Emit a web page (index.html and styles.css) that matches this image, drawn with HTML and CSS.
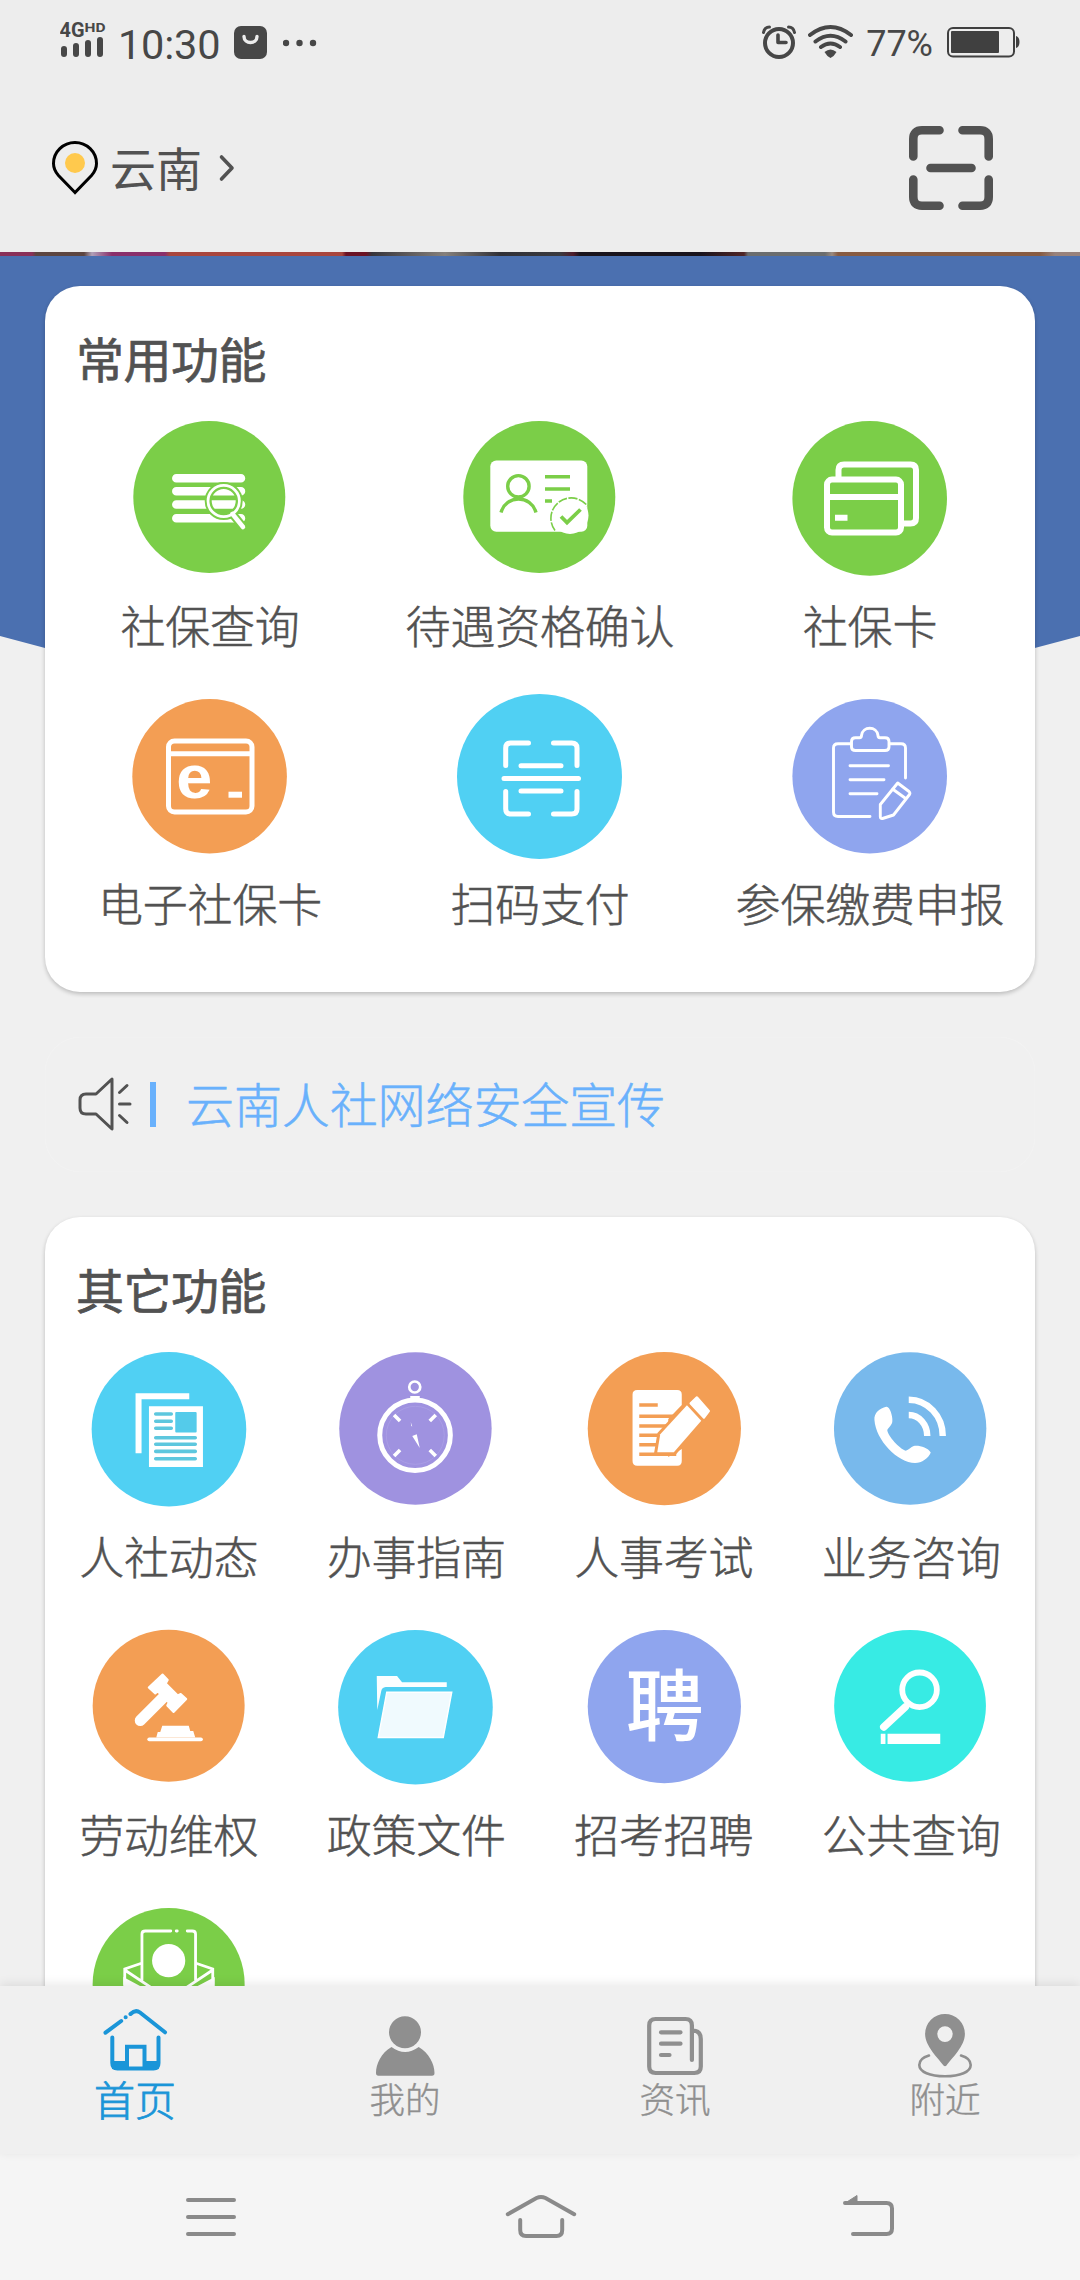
FILE: index.html
```html
<!DOCTYPE html>
<html lang="zh-CN">
<head>
<meta charset="utf-8">
<title>云南人社</title>
<link rel="stylesheet" href="styles.css">
</head>
<body>
<div class="screen">
  <header class="top">
    <div class="status">
      <svg class="status-signal" viewBox="60 0 46 86" width="46" height="86">
        <text x="59.5" y="37" class="net" textLength="25" lengthAdjust="spacingAndGlyphs">4G</text>
        <text x="84.5" y="32" class="net net-small" textLength="21" lengthAdjust="spacingAndGlyphs">HD</text>
        <path d="M64 49V54M76 46V54M88 43V54M100 40V54" class="s-dark" stroke-width="6"/>
      </svg>
      <span class="clock">10:30</span>
      <svg class="bag" viewBox="234 0 33 86" width="33" height="86">
        <rect x="234" y="26" width="33" height="33" rx="7" fill="#474747"/>
        <path d="M244 36.500C244 44.500 257 44.500 257 36.500" fill="none" stroke="#ededed" stroke-width="3.400" stroke-linecap="round"/>
      </svg>
      <svg viewBox="283 0 34 86" width="34" height="86" fill="#474747"><circle cx="286" cy="43" r="3.200"/><circle cx="299.500" cy="43" r="3.200"/><circle cx="313" cy="43" r="3.200"/></svg>
      <div class="status-right">
        <svg viewBox="761 0 36 86" width="36" height="86" class="s-dark">
          <circle cx="779" cy="43" r="14" stroke-width="4"/>
          <path d="M778 35V42.500H786" stroke-width="3.600" stroke-linejoin="round"/>
          <path d="M763.500 32.500Q764.500 27 769.500 27M794.500 32.500Q793.500 27 788.500 27" stroke-width="3"/>
        </svg>
        <svg viewBox="808 0 46 86" width="46" height="86" class="s-dark">
          <path d="M810 35Q830.500 19 851 35M815.500 41.500Q830.500 30 845.500 41.500M821 47Q830.500 40 840 47" stroke-width="4"/>
          <path d="M824.500 52Q830.500 47 836.500 52Q834 56.500 830.500 58Q827 56.500 824.500 52Z" fill="#474747" stroke="none"/>
        </svg>
        <span class="percent">77%</span>
        <svg viewBox="947 0 73 86" width="73" height="86">
          <rect x="948" y="28" width="66" height="28.500" rx="5" fill="none" stroke="#404040" stroke-width="2"/>
          <rect x="951" y="31" width="48" height="22" rx="1" fill="#404040"/>
          <path d="M1016 36Q1019.500 37 1019.500 42Q1019.500 47 1016 48Z" fill="#404040"/>
        </svg>
      </div>
    </div>
    <div class="bar">
      <svg viewBox="50 138 50 60" width="50" height="60">
        <path d="M75 192.500L58.500 175.500C54.500 171 53.500 167 53.500 163.500A21.500 21 0 0 1 96.500 163.500C96.500 167 95.500 171 91.500 175.500Z" fill="none" stroke="#000" stroke-width="3"/>
        <circle cx="75" cy="163" r="10" fill="#ffc94d"/>
      </svg>
      <span class="place">云南</span>
      <svg class="chev" viewBox="218 150 20 36" width="20" height="36"><path d="M221.500 157L232 168L221.500 179" fill="none" stroke="#525252" stroke-width="3.600" stroke-linecap="round" stroke-linejoin="round"/></svg>
      <svg class="scan" viewBox="909 126 84 84" width="84" height="84" fill="none" stroke="#525252" stroke-width="8.600" stroke-linecap="round">
        <path d="M939.500 130.300H922Q913.300 130.300 913.300 139V156.500M962.500 130.300H980Q988.700 130.300 988.700 139V156.500M939.500 205.700H922Q913.300 205.700 913.300 197V179.500M962.500 205.700H980Q988.700 205.700 988.700 197V179.500M930.500 168H971.500"/>
      </svg>
    </div>
  </header>

  <main class="content">
    <div class="banner"></div>
    <div class="stack">
      <section class="card">
        <h2>常用功能</h2>
        <div class="grid cols3">
          <div class="cell">
            <svg class="ico" viewBox="125 413 170 170">
              <circle cx="209.300" cy="497" r="76" fill="#7bce48"/>
              <path d="M176.300 478.200H241M176.300 491.300H241M176.300 504.500H241M176.300 518.200H241" class="w" stroke-width="8.500"/>
              <path d="M232.500 514L243 527" stroke="#7bce48" stroke-width="8.500" fill="none"/>
              <circle cx="223.700" cy="501" r="15.500" fill="none" stroke="#7bce48" stroke-width="7"/>
              <circle cx="223.700" cy="501" r="15.700" class="w" stroke-width="2.800"/>
              <path d="M232.500 514L243 527" class="w" stroke-width="4.500"/>
            </svg>
            <span>社保查询</span>
          </div>
          <div class="cell">
            <svg class="ico" viewBox="455 413 170 170">
              <circle cx="539.300" cy="497" r="76" fill="#7bce48"/>
              <rect x="490.300" y="460.500" width="97" height="71.200" rx="6" fill="#fff"/>
              <circle cx="570" cy="515.500" r="18.500" fill="#fff"/>
              <path d="M555 530.500A20 20 0 0 1 587.500 506" fill="none" stroke="#7bce48" stroke-width="1.600" stroke-dasharray="9 1.500"/>
              <g fill="none" stroke="#7bce48" stroke-width="3.400">
                <circle cx="518.400" cy="486.300" r="10.700"/>
                <path d="M501 512.500C506 494.500 531 494.500 536 512.500M545 476.700H570M545 489H570M545 501H552"/>
                <path d="M561 516.500L567 522.500L580.500 509.500" stroke-width="3.800"/>
              </g>
            </svg>
            <span>待遇资格确认</span>
          </div>
          <div class="cell">
            <svg class="ico" viewBox="785 413 170 170">
              <circle cx="869.700" cy="498.400" r="77.300" fill="#7bce48"/>
              <g class="w butt" stroke-width="6">
                <rect x="827" y="479.600" width="74" height="53" rx="5"/>
                <path d="M827 497H901M835 517.700H847.500M838.500 477V470Q838.500 464.500 844 464.500H910.500Q916 464.500 916 470V518Q916 523.500 910.500 523.500H904"/>
              </g>
            </svg>
            <span>社保卡</span>
          </div>
          <div class="cell">
            <svg class="ico" viewBox="125 691 170 170">
              <circle cx="209.600" cy="776.300" r="77.300" fill="#f39e54"/>
              <g class="w butt" stroke-width="5">
                <rect x="168.500" y="741" width="83.500" height="71" rx="6"/>
                <path d="M168.500 753.700H252"/><path d="M228.500 794.700H242" stroke-width="6"/>
              </g>
              <text x="176.200" y="798.300" class="letter-e" textLength="36" lengthAdjust="spacingAndGlyphs">e</text>
            </svg>
            <span>电子社保卡</span>
          </div>
          <div class="cell">
            <svg class="ico" viewBox="455 691 170 170">
              <circle cx="539.500" cy="776.400" r="82.500" fill="#50d0f3"/>
              <path d="M528.500 743H510.500Q505.700 743 505.700 748V765.500M553.500 743H571.800Q577 743 577 748V765.500M528.500 814H510.500Q505.700 814 505.700 809V791.500M553.500 814H571.800Q577 814 577 809V791.500M521 765.700H561M504 778.400H578.500M521 791H561" class="w" stroke-width="5"/>
            </svg>
            <span>扫码支付</span>
          </div>
          <div class="cell">
            <svg class="ico" viewBox="785 691 170 170">
              <circle cx="869.700" cy="776.300" r="77.300" fill="#8fa5ee"/>
              <g class="w" stroke-width="2.900" stroke-linejoin="round">
                <path d="M851 743.700H838Q833.500 743.700 833.500 748V812Q833.500 816.500 838 816.500H870M889.500 743.700H901Q905.500 743.700 905.500 748V778"/>
                <path d="M855.500 737.700H859.500Q861.500 737.700 861.500 735.500C862.500 725.800 877 725.800 878 735.500Q878 737.700 880 737.700H885Q889 737.700 889 741.500V747Q889 750.500 885 750.500H855.500Q851.500 750.500 851.500 747V741.500Q851.500 737.700 855.500 737.700Z"/>
                <path d="M850 765.700H888.500M850 779.700H884M850 793.700H877"/>
                <path d="M897.700 783L909 791.500Q910.500 793 909.500 794.500L893.500 815L882.500 818.500Q880.300 819 880.300 816.500V804.500ZM892.500 789L905 798"/>
              </g>
            </svg>
            <span>参保缴费申报</span>
          </div>
        </div>
      </section>

      <section class="notice">
        <svg viewBox="78 1075 56 58" width="56" height="58" fill="none" stroke="#525252" stroke-width="3" stroke-linecap="round" stroke-linejoin="round">
          <path d="M112 1079L96 1094H86Q80 1094 80 1100V1108Q80 1114 86 1114H96L112 1129Z"/>
          <path d="M119.500 1092.500L127 1085.500M119.500 1104H130M119.500 1115.500L127 1122.500"/>
        </svg>
        <i class="mark"></i>
        <span>云南人社网络安全宣传</span>
      </section>

      <section class="card">
        <h2>其它功能</h2>
        <div class="grid cols4">
          <div class="cell">
            <svg class="ico" viewBox="83.750 1344 170 170">
              <circle cx="168.700" cy="1429.300" r="77.300" fill="#50d0f3"/>
              <path d="M135.300 1393.300H189V1399.300H141.300V1453.300H135.300ZM148.700 1406.300H202.700V1467H148.700Z" fill="#fff"/>
              <rect x="175" y="1412" width="21.400" height="20.400" rx="1" fill="#54cbea"/>
              <path d="M155.500 1414H171M155.500 1421.200H171M155.500 1428.200H171M155.500 1437.700H195M155.500 1444.200H195M155.500 1451.400H195M155.500 1458.800H195" fill="none" stroke="#5dc7de" stroke-width="3.600" stroke-linecap="round"/>
            </svg>
            <span>人社动态</span>
          </div>
          <div class="cell">
            <svg class="ico" viewBox="331.250 1344 170 170">
              <circle cx="415.700" cy="1428.500" r="76.200" fill="#9f92e0"/>
              <circle cx="415.500" cy="1435.300" r="29" fill="none" stroke="#a99de5" stroke-width="1"/>
              <g class="w butt">
                <circle cx="415.300" cy="1435.300" r="35.300" stroke-width="5"/>
                <circle cx="415" cy="1387" r="5.500" stroke-width="2.700"/>
                <path d="M410.500 1398H420" stroke-width="4"/>
                <path d="M394.300 1415L400.300 1421M436 1415L430 1421M394.300 1456L400.300 1450M436 1456L430 1450" stroke-width="3.600"/>
              </g>
              <path d="M412.500 1436L417 1434.300L420 1448ZM411 1422L412.500 1426.500L411.500 1426Z" fill="#fff"/>
            </svg>
            <span>办事指南</span>
          </div>
          <div class="cell">
            <svg class="ico" viewBox="578.750 1344 170 170">
              <circle cx="664.100" cy="1428.600" r="76.600" fill="#f39e54"/>
              <path d="M637 1390H677Q681.500 1390 681.500 1394.500V1405L668 1419V1457L681.500 1449V1461Q681.500 1465.700 677 1465.700H637Q632.300 1465.700 632.300 1461V1394.500Q632.300 1390 637 1390Z" fill="#fff"/>
              <path d="M639 1405H657.500M639 1416.300H678M639 1426H669M639 1435.300H662M639 1444.700H657M639 1454.300H676" stroke="#f39e54" stroke-width="3.600" fill="none"/>
              <path d="M686.700 1405.300L701 1420.700L673.600 1452.300H657L660 1434.300Z" fill="#fff" stroke="#f39e54" stroke-width="6" paint-order="stroke"/>
              <path d="M696.700 1397.500L708.500 1411L703.600 1417.500L690.500 1403.500Z" fill="#fff" stroke="#fff" stroke-width="2.500" stroke-linejoin="round"/>
            </svg>
            <span>人事考试</span>
          </div>
          <div class="cell">
            <svg class="ico" viewBox="826.250 1344 170 170">
              <circle cx="910.400" cy="1428.500" r="76.200" fill="#78b9ec"/>
              <path d="M886.500 1406.700C880 1408 874 1413 874.700 1420C876 1440 898 1463 915.300 1463C922 1463 929 1458 931 1452.500C928 1447.500 919 1445 914 1446C911 1447 909 1450 906 1450.700C900 1449 888 1436 887.500 1430C889 1427 892.500 1425 892.600 1421C893 1416 890 1406 886.500 1406.700Z" fill="#fff"/>
              <path d="M909 1399.700A34 36 0 0 1 943 1436M909 1415A18.500 21 0 0 1 927.500 1436" class="w butt" stroke-width="6.400"/>
            </svg>
            <span>业务咨询</span>
          </div>
          <div class="cell">
            <svg class="ico" viewBox="83.750 1622 170 170">
              <circle cx="168.400" cy="1705.800" r="76" fill="#f39e54"/>
              <path d="M140 1720.500L164 1696.500" class="w" stroke-width="11"/>
              <path d="M162.300 1674.500L167.500 1680L165.500 1683.500L177.500 1695.500L180.500 1694L186 1699L173.300 1712L167 1705.500L168.500 1702.500L157.500 1691.500L155 1693.500L148.500 1687.500Z" fill="#fff" stroke="#fff" stroke-width="2" stroke-linejoin="round"/>
              <path d="M162 1725.700H188.500L190 1731H193L195 1737.500H156L157.500 1732H160Z" fill="#fff"/>
              <path d="M149 1739.300H200.700" class="w" stroke-width="3.800"/>
            </svg>
            <span>劳动维权</span>
          </div>
          <div class="cell">
            <svg class="ico" viewBox="331.250 1622 170 170">
              <circle cx="415.700" cy="1707.300" r="77.300" fill="#50d0f3"/>
              <path d="M377 1676H397.300L402.300 1682.300H447V1687H386Q382 1687.500 381.500 1691L377.500 1710Z" fill="#fbfeff"/>
              <path d="M387 1692.200H452L443.500 1737.500H378.500Z" fill="#f0fafe" stroke="#fff" stroke-width="1.400"/>
            </svg>
            <span>政策文件</span>
          </div>
          <div class="cell">
            <svg class="ico" viewBox="578.750 1622 170 170">
              <circle cx="664.100" cy="1706.600" r="76.600" fill="#8fa5ee"/>
              <text x="625.500" y="1734.500" class="letter-pin">聘</text>
            </svg>
            <span>招考招聘</span>
          </div>
          <div class="cell">
            <svg class="ico" viewBox="826.250 1622 170 170">
              <circle cx="910.300" cy="1705.800" r="75.900" fill="#37ebe4"/>
              <circle cx="919.800" cy="1689.800" r="17.300" class="w" stroke-width="5.800"/>
              <path d="M905.500 1707L884 1727" class="w" stroke-width="7.500"/>
              <path d="M887.800 1733.700H940.500V1744H887.800ZM881 1733.700H885.700V1744H881Z" fill="#fff"/>
            </svg>
            <span>公共查询</span>
          </div>
          <div class="cell">
            <svg class="ico" viewBox="83.750 1900 170 170">
              <circle cx="168.400" cy="1984" r="76" fill="#7bce48"/>
              <path d="M123 1977L151 1992H186L214.500 1977V2030H123Z" fill="#fff"/>
              <path d="M141.700 1981V1935Q141.700 1931 145.500 1931H195.300V1981L168.500 1999Z" fill="#7bce48"/>
              <path d="M141.700 1980V1934Q141.700 1931 145 1931H170.500M176 1931H177M187 1931H192Q195.300 1931 195.300 1934V1980M140.500 1963.500L124.500 1969V1984M196.500 1963.500L212.500 1969V1984M124.500 1970L156 1991M212.500 1970L181 1991" class="w" stroke-width="2.800"/>
              <circle cx="168.400" cy="1960.700" r="16.600" fill="#fff"/>
            </svg>
          </div>
        </div>
      </section>
    </div>
  </main>

  <nav class="tabs">
    <div class="tab active">
      <svg viewBox="95 2000 80 80" width="80" height="80" fill="none" stroke="#1a95d8" stroke-width="4" stroke-linecap="round">
        <path d="M112 2061H127V2069H112ZM144.500 2061H158.500V2069H144.500Z" fill="#1a95d8" stroke="none"/>
        <path d="M105.500 2032.700L121.200 2021M125.600 2017.300H125.700M130.500 2014Q135.500 2009 140 2012.500L165 2032.300M112.300 2037.500V2063Q112.300 2068.500 117.500 2068.500H153.500Q158.500 2068.500 158.500 2063V2037.500M127 2068V2046.700H144.500V2068"/>
      </svg>
      <span>首页</span>
    </div>
    <div class="tab">
      <svg viewBox="365 2000 80 80" width="80" height="80" fill="#8f8f8f">
        <circle cx="405" cy="2032.300" r="16"/>
        <path d="M391.500 2047Q405 2057 418.700 2047C429 2053 434.500 2064 434.500 2073Q434.500 2075.700 432 2075.700H378.500Q376 2075.700 376 2073C376 2064 381 2053 391.500 2047Z"/>
      </svg>
      <span>我的</span>
    </div>
    <div class="tab">
      <svg viewBox="635 2000 80 80" width="80" height="80" fill="none" stroke="#8f8f8f" stroke-width="4.200" stroke-linecap="round">
        <path d="M691.900 2060V2025.500Q691.900 2019 685.500 2019H655.700Q649.200 2019 649.200 2025.500V2066.500Q649.200 2073 655.700 2073H694.300Q700.800 2073 700.800 2066.500V2039Q700.800 2031 693 2030.500M661 2032.300H680.500M661 2043.700H680.500M661 2055H669.500"/>
      </svg>
      <span>资讯</span>
    </div>
    <div class="tab">
      <svg viewBox="905 2000 80 80" width="80" height="80">
        <path fill-rule="evenodd" d="M945 2014A19.800 20 0 0 1 964.900 2034C964.900 2046 952 2058 946.500 2065.500Q945 2067 943.500 2065.500C938 2058 925.100 2046 925.100 2034A19.800 20 0 0 1 945 2014ZM945 2026.200A7.700 7.900 0 1 0 945 2042A7.700 7.900 0 1 0 945 2026.200Z" fill="#8f8f8f"/>
        <path d="M929 2055.500C922 2057.500 919.300 2061 919.300 2065C919.300 2072 930 2076.300 945 2076.300C960 2076.300 970.700 2072 970.700 2065C970.700 2061 968 2057.500 961 2055.500" fill="none" stroke="#8f8f8f" stroke-width="2.600" stroke-linecap="round"/>
      </svg>
      <span>附近</span>
    </div>
  </nav>

  <div class="sysnav">
    <svg viewBox="181 2190 60 54" width="60" height="54"><path d="M188 2200H234M188 2217H234M188 2234H234"/></svg>
    <svg viewBox="500 2190 80 54" width="80" height="54"><path d="M507.800 2214.200L536.500 2198Q541 2196 545.500 2198L574.200 2214.200M520.200 2220V2230Q520.200 2236 526 2236H556.500Q562.200 2236 562.200 2230V2220"/></svg>
    <svg viewBox="839 2190 60 54" width="60" height="54"><path d="M845 2203H886.500Q892 2203 892 2208.500V2228.500Q892 2234 886.500 2234H853"/><path class="arrow" d="M844.500 2203.500L857 2195.500V2203.500Z"/></svg>
  </div>
</div>
</body>
</html>
```
FILE: styles.css
```css
* { box-sizing: border-box; }
body {
  margin: 0;
  background: #f0f0f0;
  font-family: "Noto Sans CJK SC", sans-serif;
  color: #525252;
}
svg { display: block; flex: none; }
.screen {
  width: 1080px;
  height: 2280px;
  display: flex;
  flex-direction: column;
  overflow: hidden;
}

/* Top area */
.top { height: 252px; flex: none; background: #ededed; }
.status { height: 86px; padding: 0 60px; display: flex; align-items: center; }
.clock { font: 400 41.500px/86px Roboto, sans-serif; color: #474747; margin: 3px 0 0 12px; width: 101px; white-space: nowrap; letter-spacing: -.2px; }
.bag { margin: 0 16px 0 15px; }
.net { font: 700 21px Roboto, sans-serif; fill: #474747; }
.net-small { font-size: 13.500px; }
.s-dark { fill: none; stroke: #474747; stroke-linecap: round; }
.status-right { margin-left: auto; display: flex; align-items: center; }
.status-right svg:first-child { margin-right: 11px; }
.percent { font: 400 36px/86px Roboto, sans-serif; color: #474747; margin: 1px 14px 0 12px; }
.bar { height: 164px; padding: 0 87px 0 50px; display: flex; align-items: center; }
.place { font-size: 46px; line-height: 60px; margin: -4px 0 0 10px; font-weight: 400; }
.chev { margin-left: 16px; }
.scan { margin-left: auto; }

/* Scrolling content */
.content { height: 1734px; flex: none; position: relative; overflow: hidden; }
.content::before {
  content: "";
  position: absolute;
  inset: 4px 0 auto;
  height: 530px;
  background: #4b70b0;
  clip-path: polygon(0 0, 100% 0, 100% 380px, 50% 524px, 0 380px);
}
.banner {
  height: 4px;
  background: linear-gradient(90deg, #8a3058 0 32px, #5c4540 36px 84px, #b0a0b8 92px, #8a2f6a 112px 165px, #a8463e 170px 342px, #6b1224 346px 366px, #36343a 372px, #85807c 445px, #303036 500px, #3a3a3f 560px, #501c2c 573px, #18131c 580px 700px, #502526 744px, #6b6d6e 748px 825px, #9a8a80 832px, #875b42 838px 1040px, #98827c 1055px 1080px);
}
.stack { position: relative; display: flex; flex-direction: column; gap: 45px; padding: 30px 45px 0; }
.card {
  background: #fff;
  border-radius: 35px;
  padding: 41px 0 23px;
  box-shadow: 0 2px 4px rgba(0, 0, 0, .22);
}
.card h2 {
  margin: 0 0 26px 31px;
  font-size: 48px;
  line-height: 60px;
  font-weight: 400;
  letter-spacing: -.5px;
  -webkit-text-stroke: .7px currentColor;
}
.grid { display: grid; }
.cols3 { grid-template-columns: repeat(3, 330px); }
.cols4 { grid-template-columns: repeat(4, 247.500px); }
.cell { height: 278px; display: flex; flex-direction: column; align-items: center; gap: 12px; }
.cell span {
  font-size: 45px;
  line-height: 60px;
  font-weight: 300;
  white-space: nowrap;
  letter-spacing: -.2px;
  -webkit-text-stroke: .5px currentColor;
}
.ico { width: 170px; height: 170px; }
.w { fill: none; stroke: #fff; stroke-linecap: round; }
.butt { stroke-linecap: butt; }
.letter-e { font: 700 62px "Liberation Sans", sans-serif; fill: #fff; }
.letter-pin { font: 500 78px "Noto Sans CJK SC", sans-serif; fill: #fff; }

.notice {
  height: 135px;
  padding-left: 33px;
  display: flex;
  align-items: center;
  border-radius: 35px;
  box-shadow: inset 0 0 1px #f8f8f8;
}
.notice svg { margin-top: -2px; }
.mark { width: 6px; height: 45px; background: #69b1fc; margin: 0 30px 0 16px; }
.notice span {
  font-size: 48px;
  line-height: 60px;
  font-weight: 300;
  color: #69b1fc;
  margin-top: -5px;
  letter-spacing: -.1px;
  -webkit-text-stroke: .5px currentColor;
}

/* Bottom tabs */
.tabs {
  height: 168px;
  flex: none;
  display: grid;
  grid-template-columns: repeat(4, 1fr);
  background: #f0f0f0;
  box-shadow: 0 -2px 10px rgba(0, 0, 0, .09);
  position: relative;
  padding-top: 14px;
}
.tab {
  display: flex;
  flex-direction: column;
  align-items: center;
  color: #8f8f8f;
  font-size: 35.500px;
  font-weight: 300;
  line-height: 36px;
  -webkit-text-stroke: .4px currentColor;
}
.tab.active { color: #1a95d8; font-size: 41px; -webkit-text-stroke-width: .8px; }

.sysnav { height: 126px; flex: none; background: #f5f5f5; display: flex; justify-content: space-between; padding: 36px 181px 0; }
.sysnav path { fill: none; stroke: #8a8a8a; stroke-width: 4; stroke-linecap: round; }
.sysnav .arrow { fill: #8a8a8a; stroke-width: 1; }
```
